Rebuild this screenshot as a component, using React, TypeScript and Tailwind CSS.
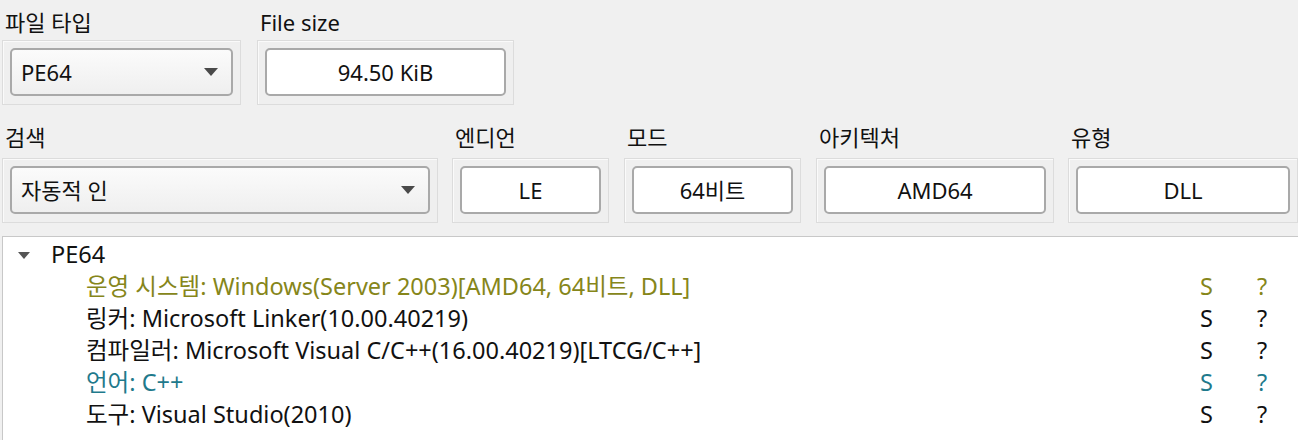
import { type ReactNode } from "react";

const font = {
  fontFamily: '"Noto Sans", "Noto Sans CJK KR", sans-serif',
};

const Arrow = () => (
  <svg width="14" height="8" viewBox="0 0 14 8" className="shrink-0">
    <path d="M0 0 L14 0 L7 8 Z" fill="#4a4a4a" />
  </svg>
);

const Group = ({
  label,
  width,
  gap,
  children,
}: {
  label: string;
  width: string;
  gap: string;
  children: ReactNode;
}) => (
  <div className={`flex flex-col ${width}`}>
    <div className="h-[28px] whitespace-nowrap pl-[3px] text-[22px] leading-[28px] text-[#111]">
      {label}
    </div>
    <div
      className={`${gap} h-[65px] border border-[#dcdcdc] bg-[#efefef] p-[7px] shadow-[inset_1px_1px_0_#fafafa]`}
    >
      {children}
    </div>
  </div>
);

const Combo = ({ value }: { value: string }) => (
  <div className="flex h-[48px] items-center justify-between rounded-[5px] border-2 border-[#a9a9a9] bg-gradient-to-b from-[#fbfbfb] to-[#efefef] pl-[9px] pr-[13px] text-[22px] text-[#111]">
    <span>{value}</span>
    <Arrow />
  </div>
);

const Field = ({ value }: { value: string }) => (
  <div className="flex h-[48px] items-center justify-center rounded-[5px] border-2 border-[#a9a9a9] bg-white text-[22px] text-[#111]">
    {value}
  </div>
);

interface Row {
  key: string;
  value: string;
  color: string;
}

const rows: Row[] = [
  {
    key: "운영 시스템",
    value: "Windows(Server 2003)[AMD64, 64비트, DLL]",
    color: "text-[#86861a]",
  },
  { key: "링커", value: "Microsoft Linker(10.00.40219)", color: "text-[#111]" },
  {
    key: "컴파일러",
    value: "Microsoft Visual C/C++(16.00.40219)[LTCG/C++]",
    color: "text-[#111]",
  },
  { key: "언어", value: "C++", color: "text-[#1f7a8c]" },
  { key: "도구", value: "Visual Studio(2010)", color: "text-[#111]" },
];

export default function App() {
  return (
    <div
      className="h-[440px] w-[1298px] overflow-hidden bg-[#f0f0f0]"
      style={font}
    >
      <div className="flex gap-[16px] pl-[2px] pt-[8px]">
        <Group label="파일 타입" width="w-[239px]" gap="mt-[4px]">
          <Combo value="PE64" />
        </Group>
        <Group label="File size" width="w-[257px]" gap="mt-[4px]">
          <Field value="94.50 KiB" />
        </Group>
      </div>

      <div className="mt-[18px] flex pl-[2px]">
        <Group label="검색" width="w-[436px]" gap="mt-[7px]">
          <Combo value="자동적 인" />
        </Group>
        <div className="ml-[14px]">
          <Group label="엔디언" width="w-[157px]" gap="mt-[7px]">
            <Field value="LE" />
          </Group>
        </div>
        <div className="ml-[15px]">
          <Group label="모드" width="w-[177px]" gap="mt-[7px]">
            <Field value="64비트" />
          </Group>
        </div>
        <div className="ml-[15px]">
          <Group label="아키텍처" width="w-[238px]" gap="mt-[7px]">
            <Field value="AMD64" />
          </Group>
        </div>
        <div className="ml-[14px]">
          <Group label="유형" width="w-[230px]" gap="mt-[7px]">
            <Field value="DLL" />
          </Group>
        </div>
      </div>

      <div className="mt-[13px] ml-[2px] h-[210px] border-l border-t border-[#c8c8c8] bg-white pt-[2px] text-[23.5px]">
        <div className="flex h-[32px] items-center">
          <div className="ml-[15px] w-[33px]">
            <svg width="12" height="7" viewBox="0 0 12 7">
              <path d="M0 0 L12 0 L6 7 Z" fill="#555" />
            </svg>
          </div>
          <span className="text-[#111]">PE64</span>
        </div>
        {rows.map((r) => (
          <div key={r.key} className={`flex h-[32px] items-center ${r.color}`}>
            <span className="ml-[83px] flex-1 whitespace-nowrap">
              {r.key}: {r.value}
            </span>
            <span className="w-[57px]">S</span>
            <span className="w-[41px]">?</span>
          </div>
        ))}
      </div>
    </div>
  );
}
